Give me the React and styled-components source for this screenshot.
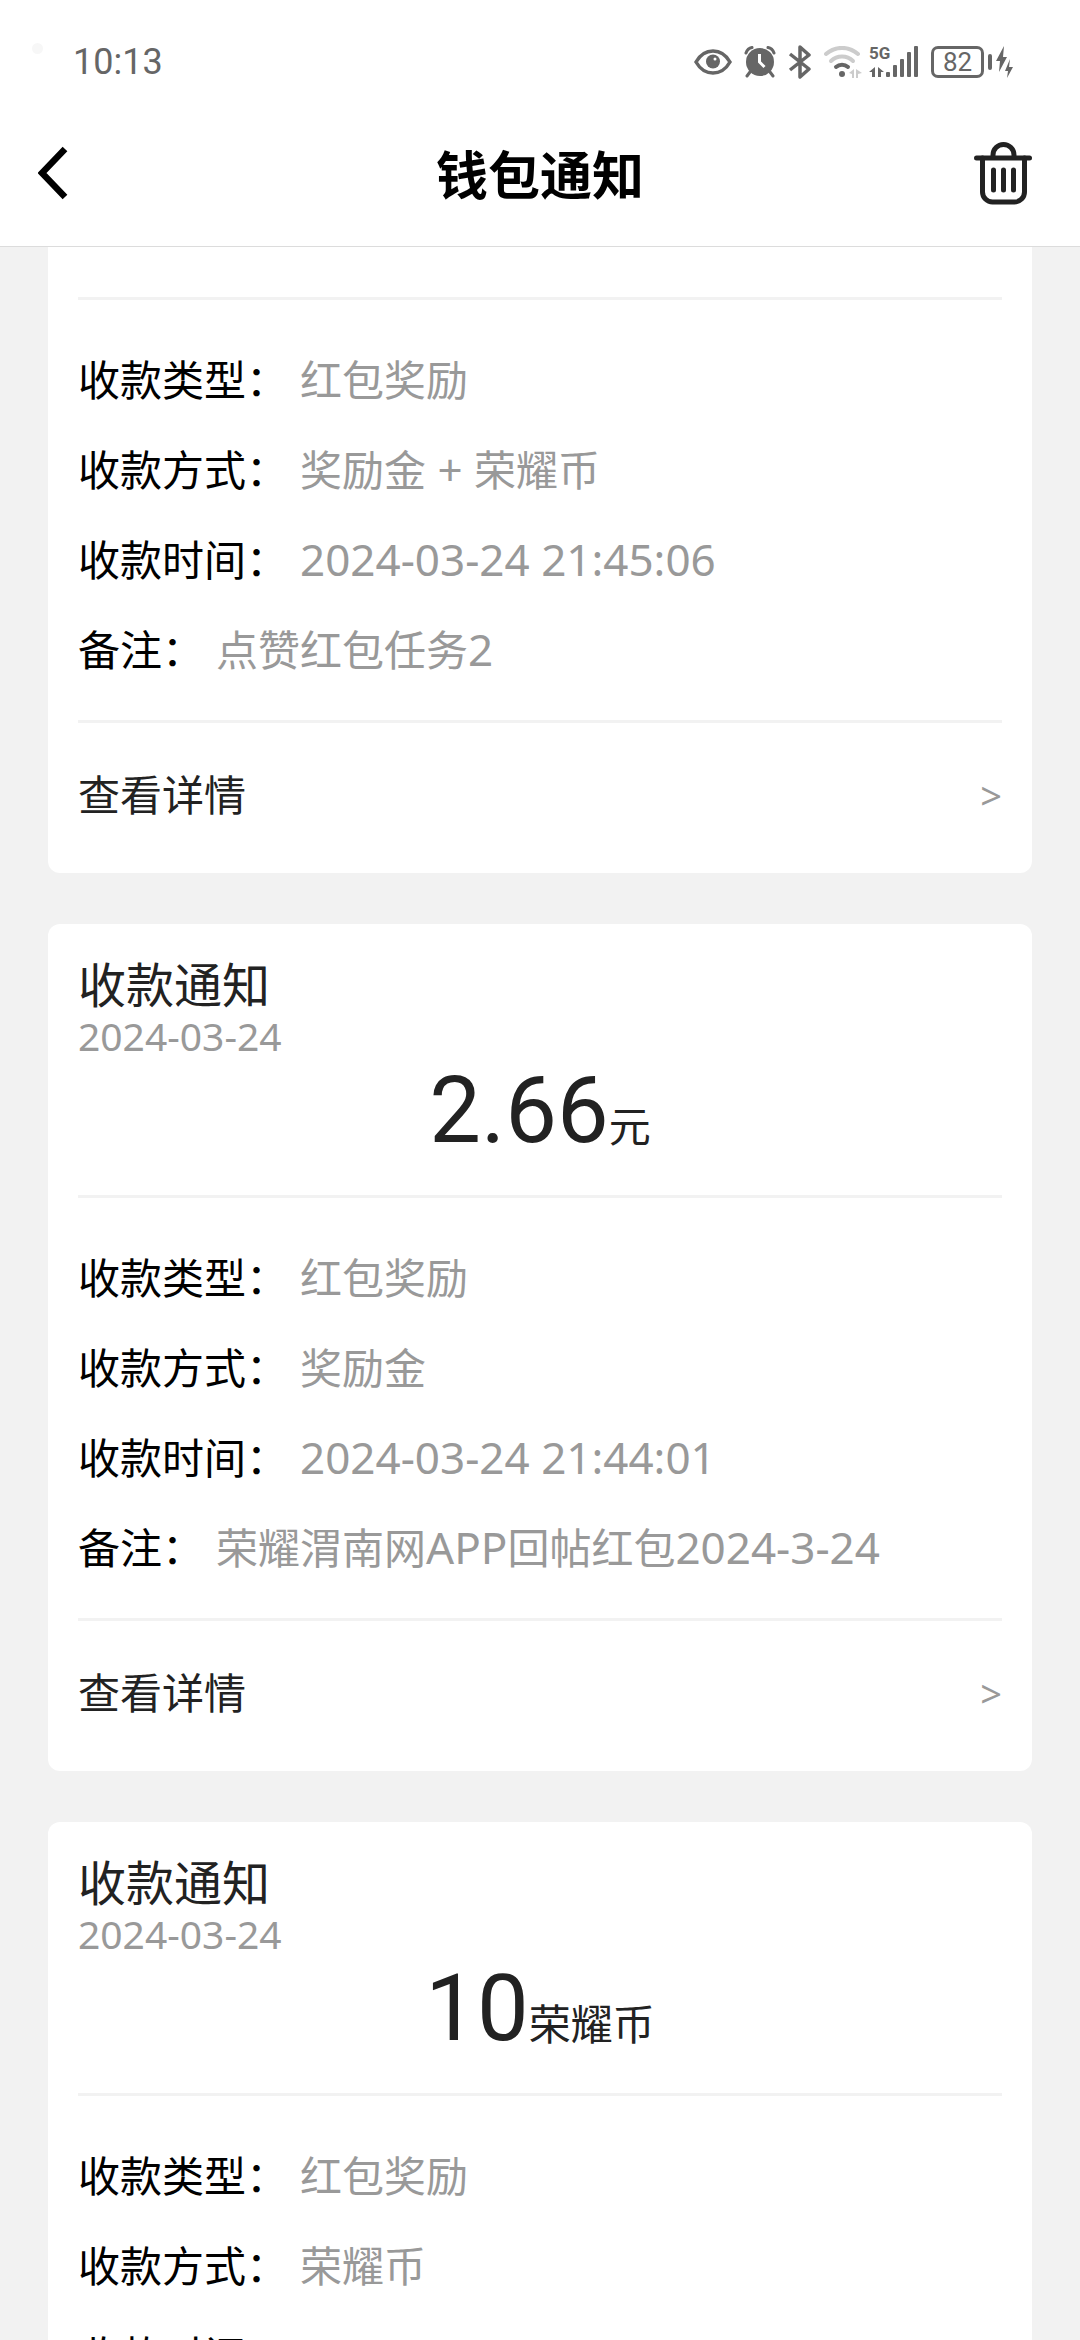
import styled, { createGlobalStyle } from "styled-components";

const notices = [
  {
    id: 1,
    type: "红包奖励",
    method: "奖励金 + 荣耀币",
    time: "2024-03-24 21:45:06",
    note: "点赞红包任务2",
  },
  {
    id: 2,
    date: "2024-03-24",
    amount: "2.66",
    unit: "元",
    type: "红包奖励",
    method: "奖励金",
    time: "2024-03-24 21:44:01",
    note: "荣耀渭南网APP回帖红包2024-3-24",
  },
  {
    id: 3,
    date: "2024-03-24",
    amount: "10",
    unit: "荣耀币",
    type: "红包奖励",
    method: "荣耀币",
    time: "2024-03-24 21:43:28",
  },
];

export default function App() {
  return (
    <Page>
      <GlobalStyle />
      <StatusBar />
      <Header>
        <IconButton type="button" aria-label="返回">
          <BackIcon />
        </IconButton>
        <PageTitle>钱包通知</PageTitle>
        <IconButton type="button" aria-label="清空">
          <TrashIcon />
        </IconButton>
      </Header>
      <List>
        {notices.map((notice) => (
          <NoticeCard key={notice.id} notice={notice} />
        ))}
      </List>
    </Page>
  );
}

function StatusBar() {
  return (
    <StyledStatusBar>
      <CameraDot />
      <Clock>10:13</Clock>
      <StatusIcons>
        <EyeIcon />
        <AlarmIcon />
        <BluetoothIcon />
        <Networks>
          <WifiIcon />
          <Mobile>
            <NetworkType>5G</NetworkType>
            <SignalIcon />
          </Mobile>
        </Networks>
        <Battery>
          <BatteryBody>82</BatteryBody>
          <BatteryTip />
          <ChargeIcon />
        </Battery>
      </StatusIcons>
    </StyledStatusBar>
  );
}

function NoticeCard({ notice }) {
  const { date, amount, unit, type, method, time, note } = notice;

  return (
    <Card $continued={!date}>
      {date ? (
        <CardHead>
          <CardTitle>收款通知</CardTitle>
          <CardDate>{date}</CardDate>
          <Amount>
            <AmountValue>{amount}</AmountValue>
            {unit}
          </Amount>
        </CardHead>
      ) : (
        <CardHeadEnd />
      )}
      <Details>
        <Detail label="收款类型：" value={type} />
        <Detail label="收款方式：" value={method} />
        <Detail label="收款时间：" value={time} />
        {note && <Detail label="备注：" value={note} />}
      </Details>
      <MoreLink href="#detail">
        <span>查看详情</span>
        <Arrow>&gt;</Arrow>
      </MoreLink>
    </Card>
  );
}

function Detail({ label, value }) {
  // latin letters and digits are set slightly larger than the chinese text
  const parts = value.split(/([\w+:\- ]+)/).filter(Boolean);

  return (
    <DetailRow>
      <dt>{label}</dt>
      <DetailValue>
        {parts.map((part, index) =>
          /^[\w+:\- ]/.test(part) ? (
            <Latin key={index}>{part}</Latin>
          ) : (
            <span key={index}>{part}</span>
          )
        )}
      </DetailValue>
    </DetailRow>
  );
}

function BackIcon() {
  return (
    <svg width="32" height="56" viewBox="0 0 32 56" fill="none">
      <path d="M27 4 4 28l23 24" stroke="#000" strokeWidth="6.500" />
    </svg>
  );
}

function TrashIcon() {
  return (
    <svg width="58" height="64" viewBox="0 0 58 64" fill="none">
      <g stroke="#222" strokeWidth="5" strokeLinecap="round">
        <path d="M2.500 17h53" />
        <path d="M19 16v-2a10.500 10.500 0 0 1 21 0v2" />
        <path d="M8.500 17v34a10 10 0 0 0 10 10h22a10 10 0 0 0 10-10V17" />
        <path d="M19.500 29v20M29.500 29v20M39.500 29v20" />
      </g>
    </svg>
  );
}

function EyeIcon() {
  return (
    <svg width="38" height="26" viewBox="0 0 38 26" fill="none">
      <path
        d="M2 13C6 6 12 2 19 2s13 4 17 11c-4 7-10 11-17 11S6 20 2 13Z"
        stroke="#666"
        strokeWidth="3.500"
      />
      <circle cx="19" cy="12.500" r="7" fill="#666" />
      <circle cx="21" cy="10" r="1.500" fill="#fff" />
    </svg>
  );
}

function AlarmIcon() {
  return (
    <svg width="32" height="32" viewBox="0 0 32 32" fill="none">
      <circle cx="16" cy="16" r="14" fill="#666" />
      <g stroke="#666" strokeWidth="3" strokeLinecap="round">
        <path d="M2 7C3 4 5 2 8 1.500M30 7c-1-3-3-5-6-5.500" />
        <path d="m6 26-3 4M26 26l3 4" />
      </g>
      <path d="M15.500 8v8l5 5" stroke="#fff" strokeWidth="3" />
    </svg>
  );
}

function BluetoothIcon() {
  return (
    <svg width="24" height="34" viewBox="0 0 24 34" fill="none">
      <path
        d="m2 9 19 15-9 8V2l9 8L2 25"
        stroke="#666"
        strokeWidth="3.500"
        strokeLinejoin="round"
      />
    </svg>
  );
}

function WifiIcon() {
  return (
    <svg width="38" height="32" viewBox="0 0 38 32" fill="none">
      <g stroke="#ccc" strokeWidth="4" strokeLinecap="round">
        <path d="M2 8a24 24 0 0 1 32 0" />
        <path d="M7 15a16 16 0 0 1 22 0" />
      </g>
      <path
        d="M12 21a9 9 0 0 1 12 0"
        stroke="#666"
        strokeWidth="4"
        strokeLinecap="round"
      />
      <circle cx="18" cy="28" r="3" fill="#666" />
      <path d="m25 27 5-4v9h-2v-4zM38 27l-6-4v9h2v-4z" fill="#ccc" />
    </svg>
  );
}

function SignalIcon() {
  return (
    <svg width="50" height="32" viewBox="0 0 50 32" fill="#666">
      <path d="m0 26 6-5v10H3v-5zM15 26l-6-5v10h3v-5z" />
      <rect x="17" y="26" width="4" height="5" rx="1" />
      <rect x="24" y="19" width="4" height="12" rx="1" />
      <rect x="31" y="13" width="4" height="18" rx="1" />
      <rect x="38" y="6" width="4" height="25" rx="1" />
      <rect x="45" y="0" width="4" height="31" rx="1" />
    </svg>
  );
}

function ChargeIcon() {
  return (
    <svg width="18" height="34" viewBox="0 0 18 34" fill="#666">
      <path d="M8 1 0 16h4L3 27l8-15H7zM14 14l-5 12h3l-1 7 6-11h-4z" />
    </svg>
  );
}

const GlobalStyle = createGlobalStyle`
  * {
    box-sizing: border-box;
  }
  body {
    margin: 0;
    background-color: #f2f2f2;
    color: #222;
    font-family: "Noto Sans", "Noto Sans CJK SC", sans-serif;
  }
  h1, h2, p, dl, dd {
    margin: 0;
    font-weight: 400;
  }
`;

const Page = styled.div`
  display: flex;
  flex-direction: column;
  height: 100vh;
`;

const StyledStatusBar = styled.div`
  display: flex;
  align-items: center;
  flex: none;
  height: 104px;
  padding: 20px 66px 0 32px;
  background-color: #fff;
  color: #666;
  font-family: Roboto, sans-serif;
`;

const CameraDot = styled.span`
  width: 11px;
  height: 11px;
  margin: 0 30px 28px 0;
  border-radius: 50%;
  background-color: #f7f7f7;
`;

const Clock = styled.span`
  font-size: 36px;
  line-height: 40px;
`;

const StatusIcons = styled.div`
  display: flex;
  align-items: center;
  gap: 12px;
  margin-left: auto;
`;

const Networks = styled.div`
  display: flex;
  gap: 7px;
`;

const Mobile = styled.div`
  position: relative;
  display: flex;
`;

const NetworkType = styled.span`
  position: absolute;
  top: 0;
  left: 0;
  font-size: 17px;
  font-weight: 700;
  line-height: 14px;
`;

const Battery = styled.div`
  display: flex;
  align-items: center;
  gap: 4px;
`;

const BatteryBody = styled.span`
  width: 53px;
  height: 32px;
  border: 3px solid #666;
  border-radius: 7px;
  font-size: 26px;
  line-height: 27px;
  text-align: center;
`;

const BatteryTip = styled.span`
  width: 4px;
  height: 16px;
  border-radius: 2px;
  background-color: #666;
`;

const Header = styled.header`
  display: grid;
  grid-template-columns: 1fr auto 1fr;
  align-items: center;
  flex: none;
  height: 143px;
  padding: 0 38px 4px;
  border-bottom: 1px solid #dcdcdc;
  background-color: #fff;
`;

const IconButton = styled.button`
  display: flex;
  justify-self: start;
  padding: 0;
  border: none;
  background: none;
  cursor: pointer;
  &:last-child {
    justify-self: end;
    padding-right: 10px;
  }
`;

const PageTitle = styled.h1`
  color: #000;
  font-family: "Noto Sans CJK SC", sans-serif;
  font-size: 52px;
  font-weight: 700;
  line-height: 76px;
`;

const List = styled.main`
  display: flex;
  flex-direction: column;
  gap: 51px;
  flex: 1;
  min-height: 0;
  padding: 0 48px;
  overflow: hidden;
`;

const Card = styled.article`
  flex: none;
  padding: 0 30px;
  border-radius: ${({ $continued }) =>
    $continued ? "0 0 12px 12px" : "12px"};
  background-color: #fff;
`;

const CardHead = styled.div`
  height: 274px;
  padding-top: 32px;
  border-bottom: 3px solid #f2f2f2;
`;

const CardHeadEnd = styled.div`
  height: 53px;
  border-bottom: 3px solid #f2f2f2;
`;

const CardTitle = styled.h2`
  font-size: 48px;
  line-height: 58px;
`;

const CardDate = styled.p`
  color: #999;
  font-size: 39px;
  line-height: 44px;
`;

const Amount = styled.p`
  font-size: 42px;
  line-height: 106px;
  text-align: center;
`;

const AmountValue = styled.span`
  font-family: Roboto, sans-serif;
  font-size: 92px;
`;

const Details = styled.dl`
  padding: 35px 0 25px;
  border-bottom: 3px solid #f2f2f2;
`;

const DetailRow = styled.div`
  display: flex;
  align-items: center;
  gap: 12px;
  height: 90px;
  color: #000;
  font-size: 42px;
  line-height: 60px;
`;

const DetailValue = styled.dd`
  color: #999;
  white-space: pre;
`;

const Latin = styled.span`
  font-size: 44px;
  line-height: 44px;
`;

const MoreLink = styled.a`
  display: flex;
  align-items: center;
  justify-content: space-between;
  height: 150px;
  padding-bottom: 7px;
  color: #222;
  font-size: 42px;
  line-height: 60px;
  text-decoration: none;
`;

const Arrow = styled.span`
  color: #999;
  font-size: 38px;
`;
